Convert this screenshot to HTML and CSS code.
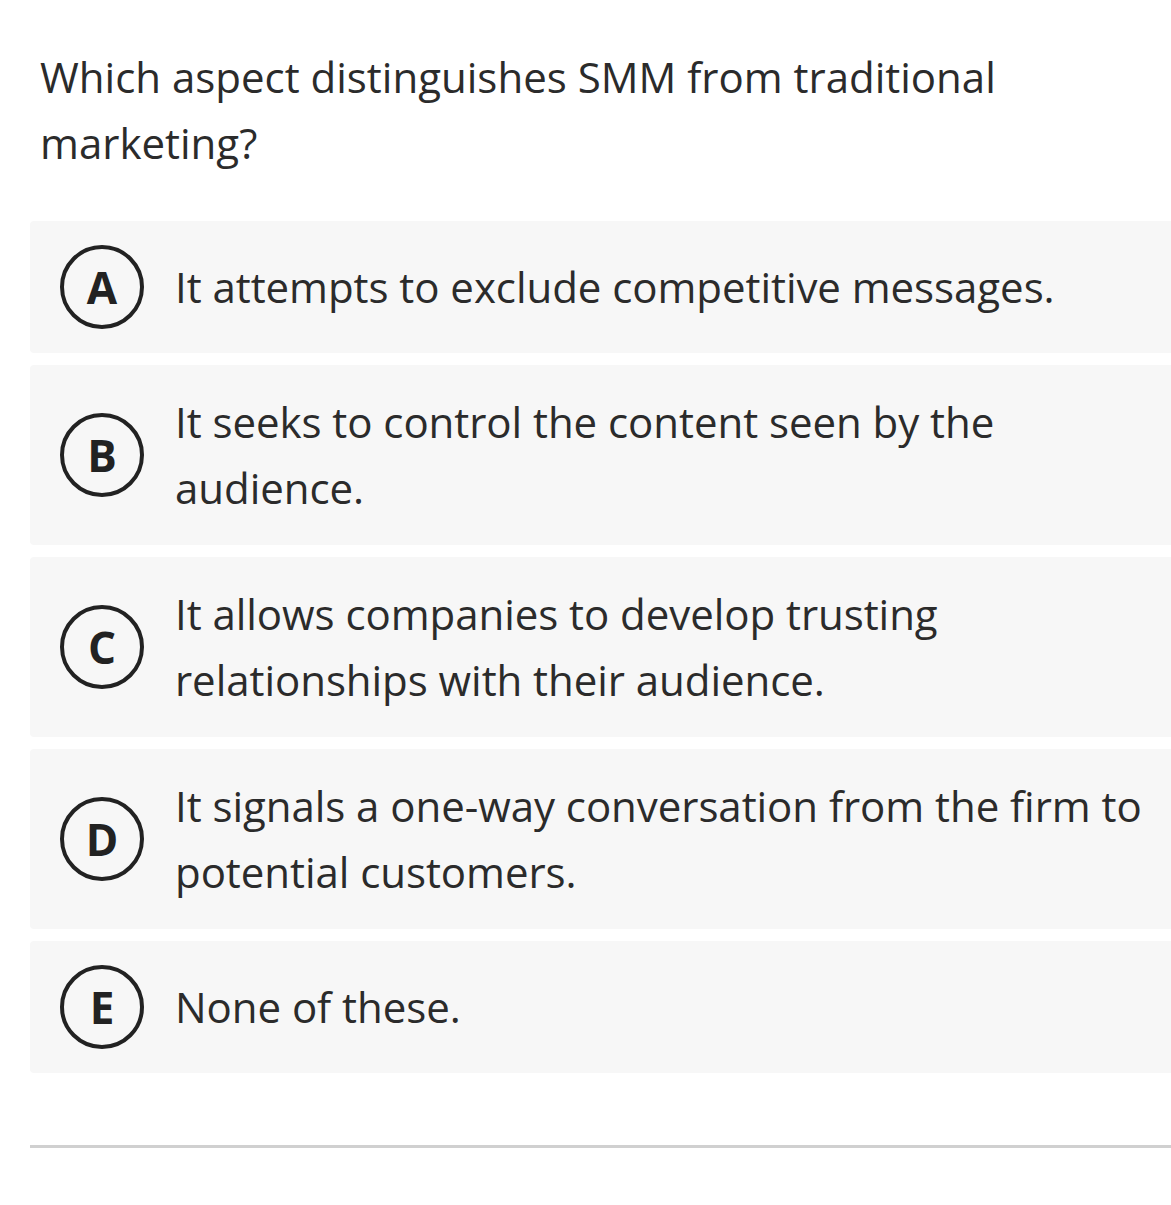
FILE: index.html
```html
<!DOCTYPE html>
<html lang="en">
<head>
<meta charset="utf-8">
<link rel="stylesheet" href="styles.css">
</head>
<body>
<main class="quiz">
  <h1 class="question">Which aspect distinguishes SMM from traditional marketing?</h1>
  <ul class="options">
    <li class="option"><span class="badge">A</span><span class="text">It attempts to exclude competitive messages.</span></li>
    <li class="option"><span class="badge">B</span><span class="text">It seeks to control the content seen by the audience.</span></li>
    <li class="option"><span class="badge">C</span><span class="text">It allows companies to develop trusting relationships with their audience.</span></li>
    <li class="option"><span class="badge">D</span><span class="text">It signals a one-way conversation from the firm to potential customers.</span></li>
    <li class="option"><span class="badge">E</span><span class="text">None of these.</span></li>
  </ul>
  <hr class="divider">
</main>
</body>
</html>
```
FILE: styles.css
```css
html, body {
  margin: 0;
  padding: 0;
  background: #ffffff;
  overflow-x: hidden;
}
body {
  font-family: "Open Sans", "Liberation Sans", sans-serif;
  color: #2b2b2b;
}
.quiz {
  padding: 44px 0 0 30px;
  width: 1160px;
}
.question {
  margin: 0 0 45px 10px;
  font-size: 42px;
  line-height: 66px;
  font-weight: 400;
  width: 1000px;
}
.options {
  list-style: none;
  margin: 0;
  padding: 0;
  display: flex;
  flex-direction: column;
  gap: 12px;
}
.option {
  display: flex;
  align-items: center;
  gap: 31px;
  background: #f7f7f7;
  border-radius: 4px;
  padding: 24px 30px;
  min-height: 84px;
}
.badge {
  flex: none;
  width: 84px;
  height: 84px;
  box-sizing: border-box;
  border: 4px solid #222222;
  border-radius: 50%;
  display: flex;
  align-items: center;
  justify-content: center;
  font-weight: 700;
  font-size: 44px;
  line-height: 1;
  color: #222222;
}
.text {
  font-size: 42px;
  line-height: 66px;
  max-width: 980px;
  letter-spacing: -0.05px;
}
.divider {
  margin: 72px 0 0 0;
  border: 0;
  height: 3px;
  background: #d0d0d0;
}
```
